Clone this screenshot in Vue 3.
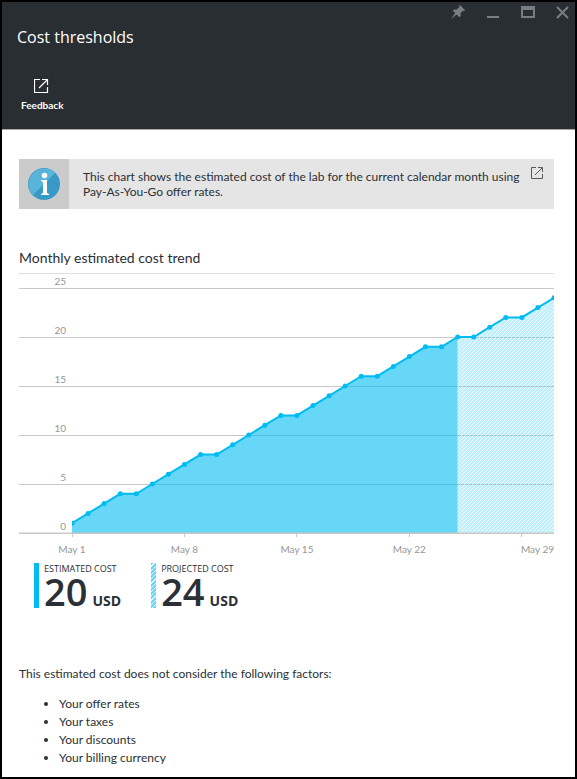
<script setup>
const costs = [1, 2, 3, 4, 4, 5, 6, 7, 8, 8, 9, 10, 11, 12, 12, 13, 14, 15, 16, 16, 17, 18, 19, 19, 20, 20, 21, 22, 22, 23, 24]
const today = 25
const left = 53
const right = 535
const base = 259

const px = (day) => left + ((day - 1) * (right - left)) / (costs.length - 1)
const py = (value) => base - value * 9.8

const points = costs.map((value, i) => ({ x: px(i + 1), y: py(value) }))
const toPath = (list) => list.map((p) => `${p.x},${p.y}`).join(' ')
const line = toPath(points)
const actual = `${px(1)},${base} ${toPath(points.slice(0, today))} ${px(today)},${base}`
const projected = `${px(today)},${base} ${toPath(points.slice(today - 1))} ${right},${base}`

const yTicks = [25, 20, 15, 10, 5, 0].map((value, i) => ({ value, y: 14 + i * 49 }))
const xTicks = [1, 8, 15, 22, 29].map((day) => ({
  day,
  tick: Math.floor(px(day)),
  label: day === 29 ? right : px(day),
  anchor: day === 29 ? 'end' : 'middle',
}))

const factors = ['Your offer rates', 'Your taxes', 'Your discounts', 'Your billing currency']
</script>

<template>
  <main class="blade">
    <header class="top">
      <div class="controls">
        <button aria-label="Pin">
          <svg width="14" height="14" viewBox="0 0 14 14"><path fill="currentColor" d="M9 0l5 5-1 1-1-.3-2.5 2.6.2 2.7-1.3 1.2-2.7-2.7L0 14l4.2-5.9L1.7 5.6 3 4.4l2.8.1L8.5 2 8.1.9z" /></svg>
        </button>
        <button aria-label="Minimize">
          <svg width="14" height="14" viewBox="0 0 14 14"><path fill="currentColor" d="M1 11h12v2H1z" /></svg>
        </button>
        <button aria-label="Maximize">
          <svg width="14" height="14" viewBox="0 0 14 14"><path fill="currentColor" fill-rule="evenodd" d="M0 1h14v12H0zM2 5v6h10V5z" /></svg>
        </button>
        <button aria-label="Close">
          <svg width="14" height="14" viewBox="0 0 14 14"><path fill="none" stroke="currentColor" stroke-width="2" d="M1 2l11 11M12 2L1 13" /></svg>
        </button>
      </div>
      <h1>Cost thresholds</h1>
      <button class="feedback">
        <svg width="16" height="16" viewBox="0 0 16 16" fill="none" stroke="currentColor">
          <path d="M6 1.5H.5v13h13V9M8 1.5h5.5V7M5 10l8-8" stroke-width="1.2" />
        </svg>
        <span>Feedback</span>
      </button>
    </header>

    <div class="body">
      <section class="info">
        <div class="info-icon">
          <svg width="32" height="32" viewBox="0 0 32 32">
            <circle cx="16" cy="16" r="16" fill="#3999c6" />
            <path d="M27.3 4.7A16 16 0 0 0 4.7 27.3z" fill="#59b4d9" />
            <circle cx="16.500" cy="7.500" r="2.800" fill="#fff" />
            <path d="M13 12h6v13l2 1v1h-8v-1l2-1V14l-2-1z" fill="#fff" />
          </svg>
        </div>
        <p>This chart shows the estimated cost of the lab for the current calendar month using Pay-As-You-Go offer rates.</p>
        <a href="#" aria-label="Open offer rates">
          <svg width="12" height="12" viewBox="0 0 12 12" fill="none" stroke="currentColor">
            <path d="M5 .5H.5v11h11V7M7 .5h4.500V5M4 8l7-7" />
          </svg>
        </a>
      </section>

      <section class="trend">
        <h2>Monthly estimated cost trend</h2>
        <svg class="chart" viewBox="0 0 535 286" role="img" aria-label="Monthly estimated cost trend">
          <defs>
            <pattern id="hatch" width="4" height="4" patternUnits="userSpaceOnUse">
              <rect width="4" height="4" fill="#00bcf2" fill-opacity="0.24" />
              <path d="M-1 1L1-1M0 4L4 0M3 5L5 3" stroke="#fff" stroke-width="1" stroke-opacity="0.7" />
            </pattern>
            <clipPath id="plot"><rect :x="left" y="0" :width="right - left" height="262" /></clipPath>
          </defs>
          <g v-for="t in yTicks" :key="t.value">
            <path class="grid" :d="`M0 ${t.y + 0.5}H535`" />
            <text class="axis" x="47" :y="t.y - 3" text-anchor="end">{{ t.value }}</text>
          </g>
          <polygon :points="actual" fill="#00bcf2" fill-opacity="0.6" />
          <polygon :points="projected" fill="url(#hatch)" />
          <path class="grid" :d="`M0 ${base - 0.5}H535`" stroke-opacity="0.5" />
          <g clip-path="url(#plot)">
            <polyline class="line" :points="line" />
            <circle v-for="(p, i) in points" :key="i" :cx="p.x" :cy="p.y" r="2.500" fill="#00bcf2" />
          </g>
          <g v-for="t in xTicks" :key="t.day">
            <path class="grid" :d="`M${t.tick + 0.5} 260V263`" />
            <text class="axis" :x="t.label" y="279" :text-anchor="t.anchor">May {{ t.day }}</text>
          </g>
        </svg>
        <div class="legend">
          <div class="metric estimated">
            <span class="name">ESTIMATED COST</span>
            <span class="value"><span>20</span><small>USD</small></span>
          </div>
          <div class="metric projected">
            <span class="name">PROJECTED COST</span>
            <span class="value"><span>24</span><small>USD</small></span>
          </div>
        </div>
      </section>

      <section class="notes">
        <p>This estimated cost does not consider the following factors:</p>
        <ul>
          <li v-for="f in factors" :key="f">{{ f }}</li>
        </ul>
      </section>
    </div>
  </main>
</template>

<style>
body {
  background: #fff;
}
</style>

<style scoped>
.blade {
  box-sizing: border-box;
  min-height: 100vh;
  border: 2px solid #000;
  background: #fff;
  color: #2b3036;
  font: 12px/15px Lato, "Open Sans", sans-serif;
}
h1, h2, p, ul {
  margin: 0;
  font-weight: 400;
}
button {
  display: flex;
  padding: 0;
  border: 0;
  background: none;
  color: inherit;
  font: inherit;
}
svg {
  display: block;
}
.top {
  background: #292e33;
  border-bottom: 1px solid #a5a7a9;
  color: #fff;
  padding-bottom: 17px;
}
.controls {
  display: flex;
  justify-content: flex-end;
  gap: 21px;
  padding: 3px 5px 0 0;
  color: #7b7e81;
}
h1 {
  padding: 6px 15px 0;
  font-family: "Open Sans", sans-serif;
  font-size: 16px;
  line-height: 24px;
}
.feedback {
  flex-direction: column;
  align-items: center;
  gap: 5px;
  margin: 29px 0 0 19px;
  font-size: 10px;
  line-height: 13px;
  font-weight: 700;
}
.body {
  padding: 29px 21px 10px 17px;
}
.info {
  display: flex;
  min-height: 50px;
  background: #e5e5e5;
}
.info-icon {
  display: flex;
  flex: none;
  align-items: center;
  justify-content: center;
  width: 50px;
  background: #cbcbcb;
}
.info p {
  flex: 1;
  padding: 10px 8px 10px 14px;
}
.info a {
  padding: 8px 11px 0 0;
  color: #55585c;
}
.trend {
  padding-top: 40px;
}
h2 {
  padding-bottom: 7px;
  border-bottom: 1px solid #e0e0e0;
  font-size: 14px;
  line-height: 17px;
}
.chart {
  width: 100%;
}
.grid {
  stroke: #c8c8c8;
}
.axis {
  fill: #959799;
  font-size: 10px;
}
.line {
  fill: none;
  stroke: #00bcf2;
  stroke-width: 2;
}
.legend {
  display: flex;
  gap: 30px;
  padding: 3px 15px 0;
  font-family: "Open Sans", sans-serif;
}
.metric {
  display: grid;
  grid-template-columns: 5px auto;
  grid-template-rows: 11px 34px;
  column-gap: 5px;
}
.metric::before {
  content: "";
  grid-row: 1 / 3;
  background: #00bcf2;
}
.projected::before {
  background: repeating-linear-gradient(135deg, #66d7f8 0 2px, #e8f9fe 2px 3px);
}
.name {
  font-size: 9px;
  line-height: 11px;
}
.value {
  display: flex;
  align-items: baseline;
  gap: 5px;
  grid-column: 2;
  font-size: 38px;
  line-height: 34px;
  font-weight: 600;
}
small {
  font-size: 14px;
  font-weight: 700;
}
.notes {
  padding-top: 58px;
}
.notes ul {
  padding: 14px 0 0 40px;
  line-height: 18px;
}
</style>
